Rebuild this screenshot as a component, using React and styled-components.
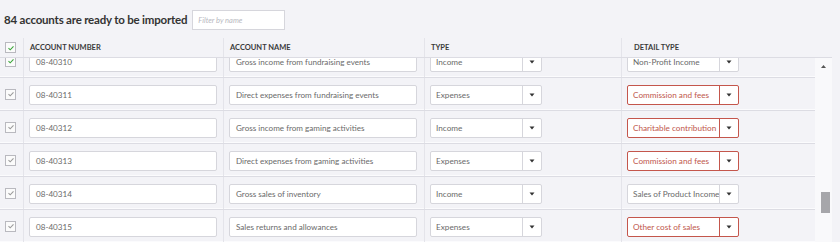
import React from 'react';
import styled, { createGlobalStyle } from 'styled-components';

const GlobalStyle = createGlobalStyle`
  html, body {
    margin: 0;
    padding: 0;
    background: #f3f3f7;
    font-family: 'Lato', 'Noto Sans', sans-serif;
    overflow: hidden;
  }
`;

const rows = [
  { num: '08-40310', name: 'Gross income from fundraising events', type: 'Income', detail: 'Non-Profit Income', error: false, active: true },
  { num: '08-40311', name: 'Direct expenses from fundraising events', type: 'Expenses', detail: 'Commission and fees', error: true },
  { num: '08-40312', name: 'Gross income from gaming activities', type: 'Income', detail: 'Charitable contribution', error: true },
  { num: '08-40313', name: 'Direct expenses from gaming activities', type: 'Expenses', detail: 'Commission and fees', error: true },
  { num: '08-40314', name: 'Gross sales of inventory', type: 'Income', detail: 'Sales of Product Income', error: false },
  { num: '08-40315', name: 'Sales returns and allowances', type: 'Expenses', detail: 'Other cost of sales', error: true },
];

const Check = ({ green }) => (
  <CheckBox>
    <svg width="8" height="8" viewBox="0 0 8 8">
      <path d="M1.5 4.2 L3.2 5.8 L6.5 2.4" fill="none" stroke={green ? '#3aa53a' : '#9a9a9a'} strokeWidth="1.1" />
    </svg>
  </CheckBox>
);

const Select = ({ value, error }) => (
  <SelectBox error={error}>
    <SelectText error={error}>{value}</SelectText>
    <SelectArrow error={error}>
      <svg width="6" height="4" viewBox="0 0 6 4">
        <path d="M0.5 0.5 L5.5 0.5 L3 3.5 Z" fill="#333" />
      </svg>
    </SelectArrow>
  </SelectBox>
);

const App = () => {
  return (
    <>
      <GlobalStyle />
      <Page>
        <TitleBar>
          <Title>84 accounts are ready to be imported</Title>
          <Filter placeholder="Filter by name" />
        </TitleBar>

        <HeaderRow>
          <CheckCell>
            <Check green />
          </CheckCell>
          <HeadCell w={200}>Account Number</HeadCell>
          <HeadCell w={201}>Account Name</HeadCell>
          <HeadCell w={197}>Type</HeadCell>
          <HeadCell w={210} pad={12}>Detail Type</HeadCell>
        </HeaderRow>

        <BodyArea>
          <Rows>
            <RowsInner>
              {rows.map((r) => (
                <Row key={r.num}>
                  <CheckCell>
                    <Check green={r.active} />
                  </CheckCell>
                  <Cell w={200}>
                    <TextInput>{r.num}</TextInput>
                  </Cell>
                  <Cell w={201}>
                    <TextInput>{r.name}</TextInput>
                  </Cell>
                  <Cell w={197}>
                    <Select value={r.type} />
                  </Cell>
                  <Cell w={193}>
                    <Select value={r.detail} error={r.error} />
                  </Cell>
                </Row>
              ))}
            </RowsInner>
          </Rows>
          <ScrollTrack>
            <ScrollUp>
              <svg width="5" height="3" viewBox="0 0 5 3">
                <path d="M0 3 L2.5 0 L5 3 Z" fill="#555" />
              </svg>
            </ScrollUp>
            <ScrollThumb />
          </ScrollTrack>
        </BodyArea>
      </Page>
    </>
  );
};

// Styled Components

const Page = styled.div`
  width: 840px;
  height: 242px;
  overflow: hidden;
`;

const TitleBar = styled.div`
  display: flex;
  align-items: center;
  gap: 5px;
  height: 38px;
  padding: 0 0 0 4px;
  box-sizing: border-box;
`;

const Title = styled.h1`
  margin: 0;
  font-size: 11.5px;
  font-weight: 700;
  color: #333;
  letter-spacing: -0.2px;
`;

const Filter = styled.input`
  width: 93px;
  height: 20px;
  box-sizing: border-box;
  margin-top: 2px;
  border: 1px solid #d6d6dc;
  background: #fff;
  padding: 0 5px;
  font-family: inherit;
  font-size: 7.5px;
  font-style: italic;
  outline: none;

  &::placeholder {
    color: #b8b8c0;
  }
`;

const HeaderRow = styled.div`
  display: flex;
  height: 20px;
  width: 832px;
  border-bottom: 1px solid #dcdce3;
  box-sizing: border-box;
`;

const CheckCell = styled.div`
  width: 24px;
  flex: none;
  display: flex;
  align-items: center;
  justify-content: center;
  padding-right: 2px;
  box-sizing: border-box;
  border-right: 1px solid #e4e4ea;
`;

const HeadCell = styled.div`
  width: ${(p) => p.w}px;
  flex: none;
  box-sizing: border-box;
  padding-left: ${(p) => p.pad || 6}px;
  display: flex;
  align-items: center;
  font-size: 7.5px;
  font-weight: 700;
  text-transform: uppercase;
  color: #3a3a3a;
  border-right: 1px solid #e4e4ea;
  &:last-child {
    border-right: none;
  }
`;

const CheckBox = styled.div`
  width: 11px;
  height: 11px;
  box-sizing: border-box;
  border: 1px solid #b9b9bf;
  background: #fbfbfb;
  display: flex;
  align-items: center;
  justify-content: center;
`;

const BodyArea = styled.div`
  display: flex;
  height: 184px;
`;

const Rows = styled.div`
  width: 815px;
  overflow: hidden;
`;

const RowsInner = styled.div`
  margin-top: -13px;
`;

const Row = styled.div`
  display: flex;
  height: 33px;
  box-sizing: border-box;
  border-bottom: 1px solid #dcdce3;
  box-shadow: inset 0 -1px 0 #fbfbfd;
`;

const Cell = styled.div`
  width: ${(p) => p.w}px;
  flex: none;
  box-sizing: border-box;
  padding: 7px 0 0 5px;
  border-right: 1px solid #e4e4ea;
  &:last-child {
    border-right: none;
  }
`;

const TextInput = styled.div`
  width: 188px;
  height: 20px;
  box-sizing: border-box;
  border: 1px solid #d6d6dc;
  border-radius: 2px;
  background: #fff;
  padding-left: 6px;
  display: flex;
  align-items: center;
  font-size: 8.1px;
  color: #6a6a6a;
  white-space: nowrap;
  overflow: hidden;
`;

const SelectBox = styled.div`
  width: 112px;
  height: 20px;
  box-sizing: border-box;
  display: flex;
  border: 1px solid ${(p) => (p.error ? '#c4564c' : '#d6d6dc')};
  border-radius: 2px;
  background: #fff;
`;

const SelectText = styled.div`
  flex: 1;
  min-width: 0;
  padding-left: 5px;
  display: flex;
  align-items: center;
  font-size: 8.2px;
  color: ${(p) => (p.error ? '#c0574c' : '#6a6a6a')};
  white-space: nowrap;
  overflow: hidden;
`;

const SelectArrow = styled.div`
  width: 18px;
  flex: none;
  display: flex;
  align-items: center;
  justify-content: center;
  border-left: 1px solid ${(p) => (p.error ? '#c4564c' : '#d6d6dc')};
`;

const ScrollTrack = styled.div`
  width: 17px;
  position: relative;
  background: #f9f9fb;
`;

const ScrollUp = styled.div`
  height: 14px;
  display: flex;
  align-items: center;
  justify-content: center;
  margin-top: 1px;
`;

const ScrollThumb = styled.div`
  position: absolute;
  left: 6px;
  top: 134px;
  width: 9px;
  height: 21px;
  background: #a6a6aa;
`;

export default App;
